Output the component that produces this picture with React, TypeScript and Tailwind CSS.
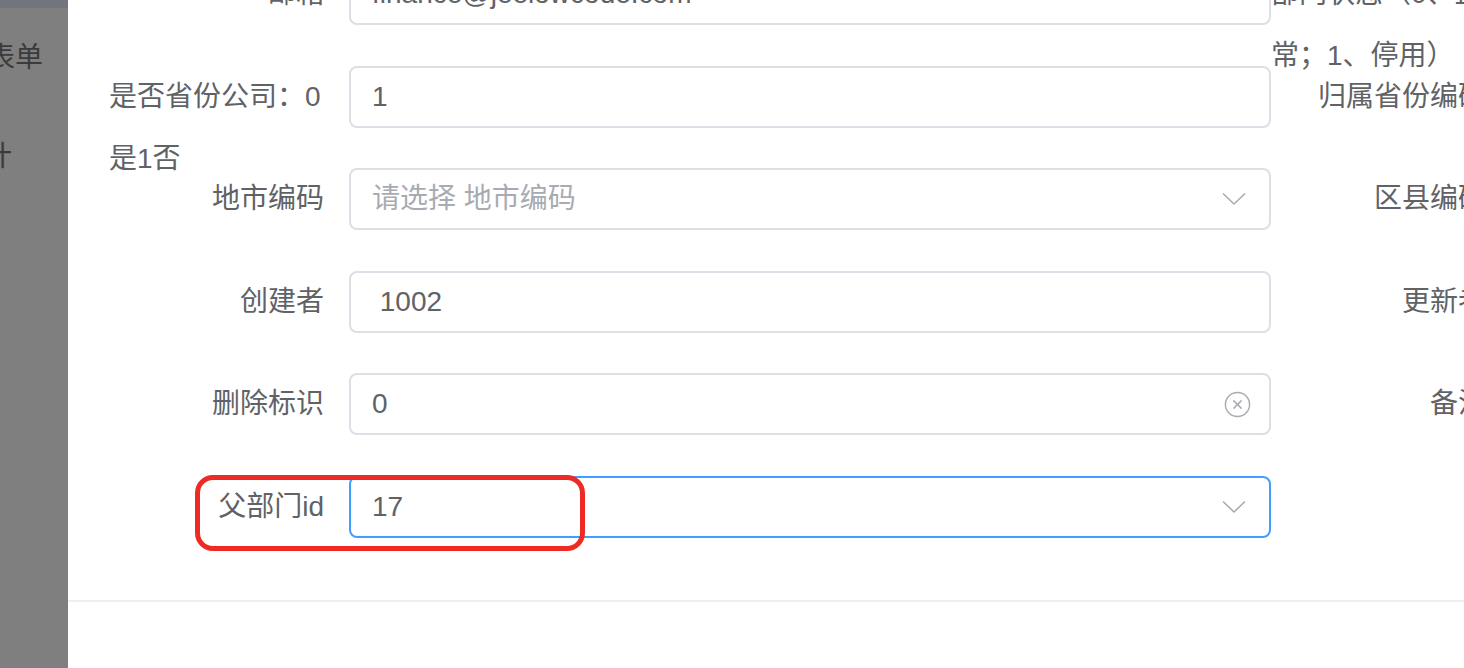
import { CircleX } from "lucide-react";

type Field = {
  label: string;
  value?: string;
  placeholder?: string;
  kind?: "input" | "select" | "clear";
  wrap?: boolean;
  focused?: boolean;
  marked?: boolean;
};

const rows: [Field, Field | null][] = [
  [
    { label: "邮箱", value: "finance@jeelowcode.com" },
    { label: "部门状态（0、正常；1、停用）", wrap: true, value: "0" },
  ],
  [
    { label: "是否省份公司：0是1否", wrap: true, value: "1" },
    { label: "归属省份编码", kind: "select", placeholder: "请选择 归属省份编码" },
  ],
  [
    { label: "地市编码", kind: "select", placeholder: "请选择 地市编码" },
    { label: "区县编码", kind: "select", placeholder: "请选择 区县编码" },
  ],
  [
    { label: "创建者", value: " 1002" },
    { label: "更新者", value: " 1002" },
  ],
  [
    { label: "删除标识", value: "0", kind: "clear" },
    { label: "备注", placeholder: "请输入 备注" },
  ],
  [{ label: "父部门id", value: "17", kind: "select", focused: true, marked: true }, null],
];

const font = { fontFamily: '"Liberation Sans", "Noto Sans CJK SC", sans-serif' };

const Chevron = () => (
  <svg width="24" height="14" viewBox="0 0 24 14" className="text-[#a8abb2]">
    <polyline points="1,1.5 12,12 23,1.5" fill="none" stroke="currentColor" strokeWidth="1.6" />
  </svg>
);

function FormItem({ field }: { field: Field }) {
  return (
    <div className="relative flex h-[62px] w-[1162px] shrink-0">
      <label
        className={
          "w-[240px] shrink-0 pr-[25px] text-[28px] leading-[62px] text-[#606266] " +
          (field.wrap ? "text-left" : "text-right")
        }
      >
        {field.label}
      </label>
      <div
        className={
          "flex h-[62px] w-[922px] shrink-0 items-center rounded-[8px] border-2 bg-white pl-[21px] pr-[23px] " +
          (field.focused ? "border-[#409eff]" : "border-[#dcdfe6]")
        }
      >
        <span
          className={
            "flex-1 whitespace-pre text-[28px] " +
            (field.value ? "text-[#606266]" : "text-[#a8abb2]")
          }
        >
          {field.value ?? field.placeholder}
        </span>
        {field.kind === "select" && <Chevron />}
        {field.kind === "clear" && <CircleX className="mr-[-6px] h-[29px] w-[29px] text-[#a8abb2]" strokeWidth={1.2} />}
      </div>
      {field.marked && (
        <div className="pointer-events-none absolute left-[86px] top-[-1px] h-[76px] w-[390px] rounded-[18px] border-[5px] border-[#ee2a24]" />
      )}
    </div>
  );
}

export default function App() {
  return (
    <div className="flex h-[668px] w-[1464px] overflow-hidden bg-white" style={font}>
      <aside className="flex w-[68px] shrink-0 flex-col overflow-hidden bg-[#7f7f7f] text-[28px] leading-[40px] text-[#3b3b3b]">
        <div className="h-[8px] bg-[#70757e]" />
        <div className="ml-[-13px] mt-[30px] whitespace-nowrap">表单</div>
        <div className="ml-[-16px] mt-[59px] whitespace-nowrap">计</div>
      </aside>
      <main className="flex min-w-0 flex-1 flex-col overflow-hidden bg-white">
        <div className="mt-[-37px] flex flex-col gap-y-[40.5px] pl-[41px]">
          {rows.map(([left, right], i) => (
            <div key={i} className="flex">
              <FormItem field={left} />
              {right && <FormItem field={right} />}
            </div>
          ))}
        </div>
        <div className="mt-[62.5px] flex-1 border-t-2 border-[#efefef]" />
      </main>
    </div>
  );
}
